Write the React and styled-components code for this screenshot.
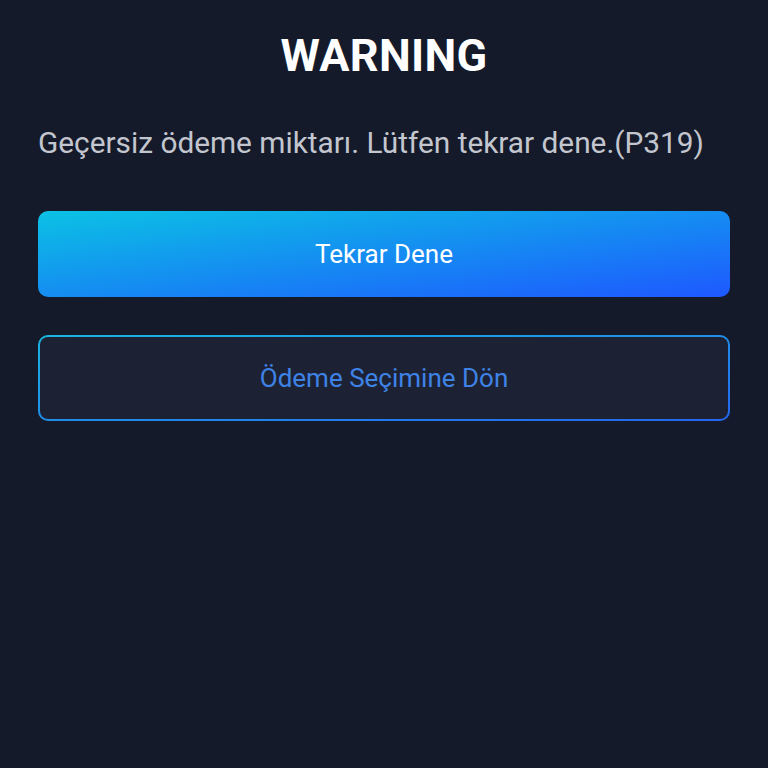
import styled, { createGlobalStyle } from 'styled-components'

const GlobalStyle = createGlobalStyle`
  html, body {
    margin: 0;
    padding: 0;
    background: #141a2a;
  }
  * { box-sizing: border-box; }
`;

export default function App() {
  return (
    <>
      <GlobalStyle />
      <Page>
        <Title>WARNING</Title>
        <Message>Geçersiz ödeme miktarı. Lütfen tekrar dene.(P319)</Message>
        <Actions>
          <PrimaryButton>Tekrar Dene</PrimaryButton>
          <OutlineButton>
            <span>Ödeme Seçimine Dön</span>
          </OutlineButton>
        </Actions>
      </Page>
    </>
  )
}

const Page = styled.div`
  width: 768px;
  height: 768px;
  background: #141a2a;
  padding: 30px 38px 0;
  display: flex;
  flex-direction: column;
  font-family: Roboto, "Liberation Sans", sans-serif;
`;

const Title = styled.h1`
  margin: 0;
  text-align: center;
  color: #ffffff;
  font-size: 45px;
  font-weight: 700;
  line-height: 52px;
  letter-spacing: 0.3px;
`;

const Message = styled.p`
  margin: 41px 0 0;
  color: #c3c6ce;
  font-size: 29.8px;
  font-weight: 400;
  line-height: 40px;
`;

const Actions = styled.div`
  margin-top: 48px;
  display: flex;
  flex-direction: column;
  gap: 38px;
`;

const PrimaryButton = styled.button`
  height: 86px;
  width: 100%;
  border: none;
  border-radius: 10px;
  background: linear-gradient(to bottom right, #0bc2e4 0%, #1e58ff 100%);
  color: #ffffff;
  font-family: inherit;
  font-size: 26px;
  font-weight: 400;
`;

const OutlineButton = styled.button`
  height: 86px;
  width: 100%;
  padding: 2px;
  border: none;
  border-radius: 10px;
  background: linear-gradient(to bottom right, #19b6e0 0%, #2466f0 100%);
  font-family: inherit;
  display: flex;

  span {
    flex: 1;
    display: flex;
    align-items: center;
    justify-content: center;
    border-radius: 8px;
    background: #1c2233;
    color: #3f82e6;
    font-size: 26px;
    font-weight: 400;
  }
`;
